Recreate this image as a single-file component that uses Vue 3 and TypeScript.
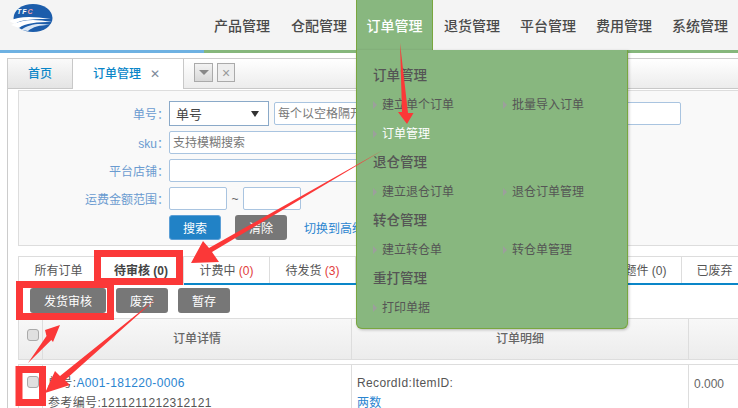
<template>
  <div class="page">
    <header class="topbar">
      <svg class="logo" viewBox="0 0 44 28" width="44" height="28">
        <ellipse cx="24" cy="14" rx="19.500" ry="14" fill="#1c5dab" />
        <path d="M0 17 C10 12 22 12 42 15 C28 15 12 15 6 20 Z" fill="#fff" />
        <path d="M2 21 C14 15 26 15 43 18 C28 18 16 19 10 24 Z" fill="#fff" />
        <path d="M12 26 C20 20 30 19 41 21 C30 21 24 23 19 27 Z" fill="#dce8f5" />
        <text x="8" y="9.500" class="logo-text">TF<tspan fill="#f0a0a8">C</tspan></text>
      </svg>
      <nav class="nav">
        <a v-for="item in navItems" :key="item" class="nav-item" :class="{ active: item === '订单管理' }">{{ item }}</a>
      </nav>
    </header>
    <div class="strip"></div>

    <main class="content">
      <div class="tabbar">
        <div class="page-tab">首页</div>
        <div class="page-tab current">订单管理<span class="tab-close">✕</span></div>
        <div class="tab-tools">
          <span class="tool"><i class="tool-arrow"></i></span>
          <span class="tool tool-x">×</span>
        </div>
      </div>

      <section class="search">
        <div class="row first">
          <label>单号：</label>
          <div class="select">单号<i class="select-arrow"></i></div>
          <input class="field long" placeholder="每个以空格隔开" />
        </div>
        <div class="row sku">
          <label>sku：</label>
          <input class="field wide" placeholder="支持模糊搜索" />
        </div>
        <div class="row">
          <label>平台店铺：</label>
          <input class="field wide" />
        </div>
        <div class="row">
          <label>运费金额范围：</label>
          <input class="field small" />
          <span class="tilde">~</span>
          <input class="field small" />
        </div>
        <div class="row actions">
          <button class="btn primary">搜索</button>
          <button class="btn">清除</button>
          <a class="switch">切换到高级搜索</a>
        </div>
      </section>

      <div class="status-tabs">
        <div v-for="tab in statusTabs" :key="tab.name" class="status-tab" :class="{ on: tab.on }" :style="{ width: tab.width + 'px' }">
          {{ tab.name }}
          <span v-if="tab.count !== undefined" :class="{ red: !tab.grey }">({{ tab.count }})</span>
        </div>
      </div>

      <div class="toolbar">
        <button class="btn wide-btn">发货审核</button>
        <button class="btn">废弃</button>
        <button class="btn">暂存</button>
      </div>

      <div class="table-head">
        <div class="cell check"><span class="box"></span></div>
        <div class="cell detail">订单详情</div>
        <div class="cell lines">订单明细</div>
        <div class="cell rest"></div>
      </div>
      <div class="table-row">
        <div class="cell check"><span class="box"></span></div>
        <div class="cell detail">
          <p>单号:<a>A001-181220-0006</a></p>
          <p>参考编号:1211211212312121</p>
        </div>
        <div class="cell lines">
          <p>RecordId:ItemID:</p>
          <p><a>两数</a></p>
        </div>
        <div class="cell rest">0.000</div>
      </div>
    </main>

    <div class="dropdown">
      <template v-for="group in menuGroups" :key="group.title">
        <h4>{{ group.title }}</h4>
        <ul>
          <li v-for="link in group.links" :key="link" :class="{ lit: link === '订单管理' }">{{ link }}</li>
        </ul>
      </template>
    </div>

    <svg class="marks" viewBox="0 0 738 408" width="738" height="408">
      <g fill="none" stroke="#fb3838" stroke-width="7">
        <rect x="97.500" y="253.500" width="82" height="28" />
        <rect x="19.500" y="284.500" width="91" height="32" />
        <rect x="19" y="369.500" width="23.500" height="33" />
      </g>
      <g fill="#fb3838">
        <polygon points="400,43 408,113 413.500,113 407,124 398,112 402,112" />
        <polygon points="383,150 212,252 219,262 191,263 203,241 209,248" />
        <polygon points="28,363 46.500,336 45,330 60,325 53,342 51.300,340" />
        <polygon points="157,298 60,376 55,371 45,393 70,385 65,380" />
      </g>
    </svg>
  </div>
</template>

<script setup lang="ts">
interface StatusTab {
  name: string;
  count?: number;
  width: number;
  on?: boolean;
  grey?: boolean;
}

interface MenuGroup {
  title: string;
  links: string[];
}

const navItems: string[] = ['产品管理', '仓配管理', '订单管理', '退货管理', '平台管理', '费用管理', '系统管理'];

const statusTabs: StatusTab[] = [
  { name: '所有订单', width: 81 },
  { name: '待审核', count: 0, width: 85, on: true, grey: true },
  { name: '计费中', count: 0, width: 86 },
  { name: '待发货', count: 3, width: 86 },
  { name: '', width: 242 },
  { name: '问题件', count: 0, width: 84, grey: true },
  { name: '已废弃', width: 66 },
];

const menuGroups: MenuGroup[] = [
  { title: '订单管理', links: ['建立单个订单', '批量导入订单', '订单管理'] },
  { title: '退仓管理', links: ['建立退仓订单', '退仓订单管理'] },
  { title: '转仓管理', links: ['建立转仓单', '转仓单管理'] },
  { title: '重打管理', links: ['打印单据'] },
];
</script>

<style>
html,
body {
  margin: 0;
  overflow: hidden;
  background: #fff;
}
</style>

<style scoped>
.page {
  position: relative;
  width: 738px;
  height: 408px;
  overflow: hidden;
  background: #fff;
  font-family: "Liberation Sans", "Noto Sans CJK SC", sans-serif;
  font-size: 12px;
  color: #555;
}

.topbar {
  display: flex;
  justify-content: space-between;
  height: 50px;
  background: #f4f4f4;
}

.logo {
  margin: 4px 0 0 9px;
}

.logo-text {
  font-size: 7px;
  font-weight: 700;
  font-style: italic;
  letter-spacing: 1px;
  fill: #fff;
}

.nav {
  display: flex;
}

.nav-item {
  width: 76px;
  line-height: 53px;
  text-align: center;
  font-size: 14px;
  font-weight: 500;
  color: #4a4a4a;
}

.nav-item:first-child {
  margin-right: 1px;
}

.nav-item.active {
  box-sizing: border-box;
  width: 77px;
  margin: 0 1px 0 -1px;
  background: #88b77f;
  border: solid #79a63f;
  border-width: 0 1px;
  color: #fff;
}

.strip {
  height: 3px;
  background: linear-gradient(to right, #6eb1e2 204px, #86b77c 204px);
}

.content {
  margin: 5px 0 0 7px;
  border-left: 1px solid #ccc;
  border-top: 1px solid #ccc;
}

.tabbar {
  display: flex;
  height: 29px;
  border-bottom: 1px solid #c8c8c8;
  background: linear-gradient(#fff, #ececec);
}

.page-tab {
  box-sizing: border-box;
  width: 65px;
  height: 29px;
  line-height: 30px;
  text-align: center;
  color: #0a86c8;
  font-weight: 500;
  background: linear-gradient(#fafafa, #e4e4e4);
  border-right: 1px solid #c8c8c8;
}

.page-tab.current {
  width: 111px;
  height: 30px;
  padding-left: 20px;
  text-align: left;
  background: #fff;
}

.tab-close {
  margin-left: 9px;
  color: #7d8b99;
  font-size: 12px;
}

.tab-tools {
  display: flex;
  gap: 4px;
  margin: 4px 0 0 10px;
}

.tool {
  display: flex;
  align-items: center;
  justify-content: center;
  box-sizing: border-box;
  width: 19px;
  height: 19px;
  border: 1px solid #aaa;
  background: linear-gradient(#f2f2f2, #d8d8d8);
}

.tool-x {
  width: 18px;
  color: #999;
  font-size: 14px;
  background: #eee;
}

.tool-arrow {
  border: 5px solid transparent;
  border-top: 5px solid #888;
  border-bottom: 0;
}

.search {
  height: 154px;
  margin: 1px 0 0 10px;
  border: 1px solid #ddd;
  border-right: 0;
  background: #f9f9f9;
}

.row {
  display: flex;
  align-items: center;
  height: 23px;
  margin-top: 5px;
}

.row.first {
  margin-top: 11px;
}

.row.sku {
  margin-top: 6px;
}

.row label {
  flex: none;
  width: 150px;
  text-align: right;
  color: #6a9bd0;
  white-space: nowrap;
}

.select {
  display: flex;
  align-items: center;
  justify-content: space-between;
  box-sizing: border-box;
  width: 100px;
  height: 25px;
  padding: 0 9px 0 6px;
  border: 1px solid #8aa9c8;
  background: #fff;
  font-size: 13px;
  color: #444;
}

.select-arrow {
  border: 4px solid transparent;
  border-top: 6px solid #333;
  border-bottom: 0;
}

.field {
  box-sizing: border-box;
  height: 23px;
  padding: 0 3px;
  border: 1px solid #a9c4e0;
  border-radius: 2px;
  background: #fff;
  font-family: inherit;
  font-size: 12px;
  outline: none;
}

.field::placeholder {
  color: #777;
  opacity: 1;
}

.field.long {
  width: 407px;
  margin-left: 5px;
}

.field.wide {
  width: 360px;
}

.field.small {
  width: 58px;
}

.tilde {
  width: 16px;
  text-align: center;
  color: #666;
}

.row.actions {
  height: 25px;
  padding-left: 150px;
  gap: 14px;
}

.btn {
  width: 52px;
  height: 25px;
  padding: 0;
  border: 0;
  border-radius: 3px;
  background: #777;
  color: #fff;
  font-family: inherit;
  font-size: 12px;
}

.btn.primary {
  background: #2182c6;
  border: 1px solid #5c9fd6;
}

.btn.wide-btn {
  width: 76px;
}

.switch {
  margin-left: 3px;
  color: #2b85d0;
  white-space: nowrap;
}

.status-tabs {
  display: flex;
  height: 27px;
  margin: 10px 0 0 10px;
  border-bottom: 2px solid #0a86c8;
}

.status-tab {
  flex: none;
  box-sizing: border-box;
  height: 27px;
  line-height: 29px;
  text-align: center;
  border: 1px solid #ddd;
  border-width: 1px 1px 0 0;
  background: #fff;
  color: #555;
  white-space: nowrap;
}

.status-tab:first-child {
  border-left: 1px solid #ddd;
}

.status-tab.on {
  font-weight: 700;
  color: #444;
  height: 29px;
}

.red {
  color: #e23b3b;
}

.toolbar {
  display: flex;
  gap: 10px;
  height: 25px;
  margin: 3px 0 0 22px;
}

.table-head,
.table-row {
  display: flex;
  margin-left: 10px;
  border: 1px solid #ddd;
  border-right: 0;
}

.table-head {
  height: 40px;
  margin-top: 5px;
  background: linear-gradient(#f8f8f8, #ececec);
}

.table-row {
  height: 60px;
  margin-top: 4px;
}

.cell {
  flex: none;
  box-sizing: border-box;
  border-right: 1px solid #ddd;
}

.check {
  width: 24px;
  padding-left: 8px;
}

.detail {
  width: 309px;
  padding: 12px 5px;
}

.lines {
  width: 337px;
  padding: 12px 5px;
}

.rest {
  width: 60px;
  padding: 12px 5px;
  color: #666;
  border-right: 0;
}

.table-head .cell {
  display: flex;
  align-items: center;
  justify-content: center;
  padding: 0 0 4px;
  font-size: 12px;
  font-weight: 500;
  color: #666;
}

.table-head .cell.check {
  justify-content: flex-start;
  padding: 0 0 8px 8px;
}

.table-row p {
  margin: 0 0 7px;
  line-height: 13px;
  letter-spacing: 0.35px;
  white-space: nowrap;
}

.table-row a {
  color: #2b85d0;
}

.table-row .check {
  padding-top: 11px;
}

.box {
  display: block;
  box-sizing: border-box;
  width: 12px;
  height: 12px;
  border: 1px solid #aaa;
  border-radius: 3px;
  background: #e0e0e0;
}

.dropdown {
  position: absolute;
  left: 356px;
  top: 50px;
  box-sizing: border-box;
  width: 272px;
  height: 279px;
  padding: 11px 15px 0 16px;
  background: #88b77f;
  border: 1px solid #79a63f;
  border-top: 0;
  border-radius: 0 0 6px 6px;
  box-shadow: 1px 1px 3px rgba(0, 0, 0, 0.25);
}

.dropdown h4 {
  margin: 0;
  font-size: 13.500px;
  line-height: 29px;
  font-weight: 500;
  color: #555;
}

.dropdown ul {
  display: grid;
  grid-template-columns: 130px 130px;
  margin: 0;
  padding: 0;
  list-style: none;
}

.dropdown li {
  position: relative;
  height: 29px;
  padding-left: 9px;
  line-height: 31px;
  font-size: 12px;
  color: #555;
}

.dropdown li::before {
  content: "";
  position: absolute;
  left: 0;
  top: 11px;
  border: 4px solid transparent;
  border-left: 4px solid #9c9f9c;
  border-right: 0;
}

.dropdown li.lit {
  color: #fff;
}

.marks {
  position: absolute;
  left: 0;
  top: 0;
  pointer-events: none;
}
</style>
